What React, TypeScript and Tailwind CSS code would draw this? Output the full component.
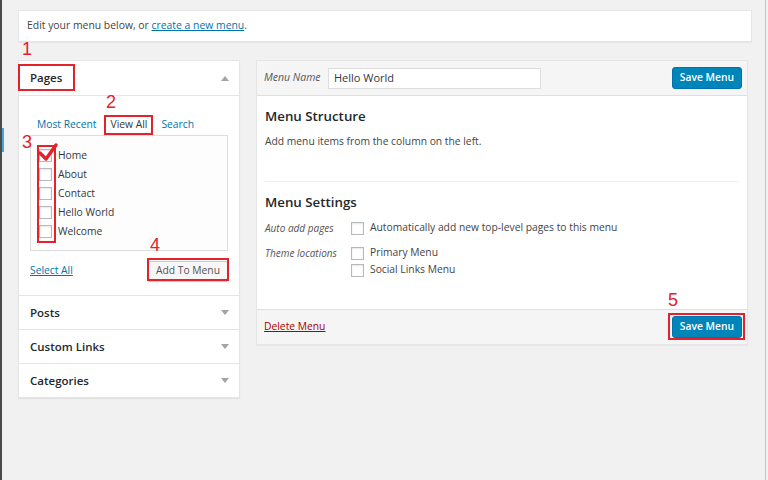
const Tri = ({ up }: { up?: boolean }) => (
  <svg width="8" height="5" viewBox="0 0 8 5" className="text-[#a0a5aa]">
    {up ? <path d="M0 5 L4 0 L8 5 Z" fill="currentColor" /> : <path d="M0 0 L8 0 L4 5 Z" fill="currentColor" />}
  </svg>
);

const Box = () => (
  <span className="inline-block w-[13px] h-[13px] border border-[#b4b9be] bg-white shadow-[inset_0_1px_2px_rgba(0,0,0,0.1)] shrink-0" />
);

const Mark = ({ n, className }: { n: string; className: string }) => (
  <span className={`absolute text-[18px] leading-none text-[#e3222b] font-['Liberation_Sans',sans-serif] ${className}`}>{n}</span>
);

const SaveBtn = () => (
  <span className="ml-auto h-[22px] px-[7px] flex items-center rounded-[3px] bg-[#0085ba] border border-[#0073aa] text-white text-[10.3px] font-semibold">Save Menu</span>
);

const pages = ['Home', 'About', 'Contact', 'Hello World', 'Welcome'];

export default function App() {
  return (
    <div className="relative w-[768px] h-[480px] overflow-hidden bg-[#f1f1f1] font-['Open_Sans',sans-serif] text-[#444] border-l-2 border-[#4a4a4a]">
      <div className="absolute left-0 top-[128px] w-[2px] h-[24px] bg-[#4aa3d8]" />
      <div className="absolute right-[2px] top-0 w-px h-full bg-[#c4c4c4]" />

      <div className="pl-[16px] pt-[10px] w-[750px]">
        <div className="h-[32px] bg-white border border-[#e5e5e5] shadow-[0_1px_1px_rgba(0,0,0,0.04)] flex items-center px-[8px] text-[10.4px]">
          Edit your menu below, or&nbsp;<span className="text-[#0073aa] underline">create a new menu</span>.
        </div>

        <div className="flex items-start gap-[16px] mt-[18px]">
          {/* left column */}
          <div className="w-[222px] bg-white border border-[#e5e5e5] shadow-[0_1px_1px_rgba(0,0,0,0.06)]">
            <div className="h-[35px] flex items-center justify-between px-[10px] border-b border-[#e5e5e5]">
              <span className="text-[11.5px] font-semibold text-[#23282d] pl-[1px]">Pages</span>
              <Tri up />
            </div>
            <div className="px-[11px] pt-[20px] pb-[14px]">
              <div className="flex gap-[14px] text-[10.3px] text-[#0073aa] pl-[7px] h-[18px] items-center">
                <span>Most Recent</span>
                <span className="text-[#32373c]">View All</span>
                <span>Search</span>
              </div>
              <div className="mt-[1px] border border-[#ddd] bg-[#fdfdfd] h-[116px] pt-[10px] pl-[8px]">
                {pages.map((p) => (
                  <div key={p} className="h-[19px] flex items-center gap-[6px] text-[10.3px] text-[#32373c]">
                    <Box />
                    <span>{p}</span>
                  </div>
                ))}
              </div>
              <div className="flex items-center justify-between mt-[10px] h-[20px]">
                <span className="text-[10.3px] text-[#0073aa] underline">Select All</span>
                <span className="h-[20px] px-[7px] flex items-center border border-[#ccc] bg-[#f7f7f7] rounded-[2px] text-[10.3px] text-[#555] shadow-[0_1px_0_#ccc]">
                  Add To Menu
                </span>
              </div>
            </div>
            {['Posts', 'Custom Links', 'Categories'].map((t) => (
              <div key={t} className="h-[34px] flex items-center justify-between px-[10px] border-t border-[#e5e5e5]">
                <span className="text-[11.5px] font-semibold text-[#23282d] pl-[1px]">{t}</span>
                <Tri />
              </div>
            ))}
          </div>

          {/* right column */}
          <div className="w-[492px] bg-white border border-[#e5e5e5] shadow-[0_1px_1px_rgba(0,0,0,0.04)]">
            <div className="h-[35px] bg-[#f5f5f5] border-b border-[#dfdfdf] flex items-center pl-[7px] pr-[5px]">
              <span className="text-[10.5px] italic text-[#555] w-[64px]">Menu Name</span>
              <span className="w-[213px] h-[21px] bg-white border border-[#ddd] flex items-center px-[5px] text-[11px] text-[#32373c]">Hello World</span>
              <SaveBtn />
            </div>
            <div className="px-[8px]">
              <div className="pt-[10px] pb-[32px] border-b border-[#eee]">
                <div className="text-[13.3px] font-semibold text-[#23282d] leading-[20px]">Menu Structure</div>
                <div className="text-[10.3px] leading-[15px] mt-[8px] text-[#444]">Add menu items from the column on the left.</div>
              </div>
              <div className="pt-[10px] pb-[31px]">
                <div className="text-[13.3px] font-semibold text-[#23282d] leading-[20px]">Menu Settings</div>
                <div className="flex items-center mt-[8px] h-[16px] text-[10.3px]">
                  <span className="w-[86px] italic text-[10px] text-[#555]">Auto add pages</span>
                  <Box />
                  <span className="ml-[6px]">Automatically add new top-level pages to this menu</span>
                </div>
                <div className="flex mt-[9px] text-[10.3px]">
                  <span className="w-[86px] italic text-[10px] text-[#555] h-[16px] flex items-center">Theme locations</span>
                  <div className="flex flex-col gap-[1px]">
                    <div className="flex items-center h-[16px]"><Box /><span className="ml-[6px]">Primary Menu</span></div>
                    <div className="flex items-center h-[16px]"><Box /><span className="ml-[6px]">Social Links Menu</span></div>
                  </div>
                </div>
              </div>
            </div>
            <div className="h-[35px] bg-[#f5f5f5] border-t border-[#dfdfdf] flex items-center pl-[7px] pr-[5px]">
              <span className="text-[10.3px] text-[#a00] underline">Delete Menu</span>
              <SaveBtn />
            </div>
          </div>
        </div>
      </div>

      {/* annotations */}
      <div className="absolute left-[16px] top-[64px] w-[57px] h-[27px] border-2 border-[#e3222b]" />
      <div className="absolute left-[102px] top-[115px] w-[49px] h-[20px] border-2 border-[#e3222b]" />
      <div className="absolute left-[35px] top-[145px] w-[19px] h-[98px] border-2 border-[#e3222b]" />
      <div className="absolute left-[145px] top-[258px] w-[82px] h-[23px] border-2 border-[#e3222b]" />
      <div className="absolute left-[666px] top-[313px] w-[77px] h-[27px] border-2 border-[#e3222b]" />
      <svg className="absolute left-[35px] top-[142px]" width="22" height="22" viewBox="0 0 22 22">
        <path d="M3 11 L9 17 L19 3" fill="none" stroke="#e3222b" strokeWidth="3.4" strokeLinecap="round" strokeLinejoin="round" />
      </svg>
      <Mark n="1" className="left-[20px] top-[40px]" />
      <Mark n="2" className="left-[104px] top-[93px]" />
      <Mark n="3" className="left-[20px] top-[133px]" />
      <Mark n="4" className="left-[148px] top-[236px]" />
      <Mark n="5" className="left-[666px] top-[291px]" />
    </div>
  );
}
